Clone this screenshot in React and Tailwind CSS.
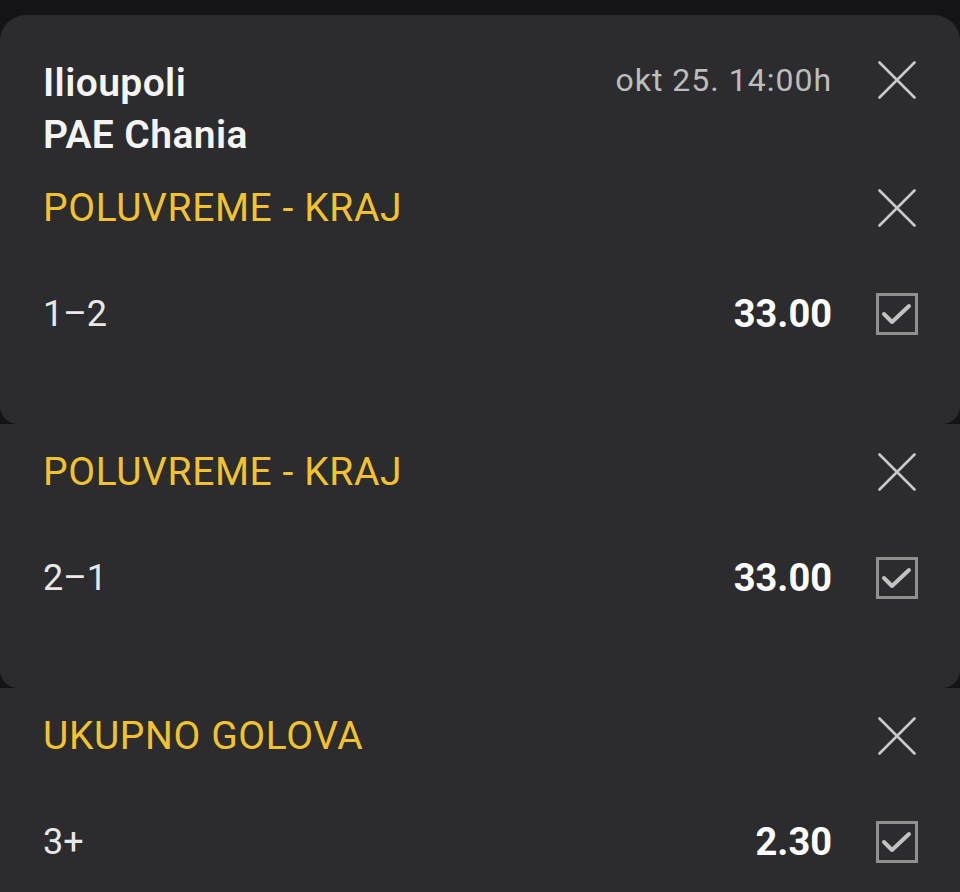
import React from "react";

const bets = [
  { market: "POLUVREME - KRAJ", pick: "1–2", odd: "33.00" },
  { market: "POLUVREME - KRAJ", pick: "2–1", odd: "33.00" },
  { market: "UKUPNO GOLOVA", pick: "3+", odd: "2.30" },
];

function CloseIcon() {
  return (
    <div className="w-[42px] h-[42px] flex items-center justify-center shrink-0">
      <svg width="38" height="38" viewBox="0 0 38 38" fill="none">
        <path d="M1.5 1.5L36.5 36.5M36.5 1.5L1.5 36.5" stroke="#c9c9c9" strokeWidth="2.6" strokeLinecap="round" />
      </svg>
    </div>
  );
}

function CheckBox() {
  return (
    <div className="w-[42px] h-[42px] shrink-0 border-[3px] border-[#8f8f8f] flex items-center justify-center">
      <svg width="36" height="36" viewBox="0 0 36 36" fill="none">
        <path d="M5 18L13 26L30 10" stroke="#c2c2c2" strokeWidth="4" strokeLinecap="round" strokeLinejoin="round" />
      </svg>
    </div>
  );
}

function BetSection({ bet }) {
  return (
    <div className="h-[264px] pl-[43px] pr-[42px] pt-[22px]">
      <div className="flex items-center justify-between h-[52px]">
        <span className="text-[39px] leading-[52px] tracking-[0.6px] text-[#f2c230]">{bet.market}</span>
        <CloseIcon />
      </div>
      <div className="flex items-center h-[52px] mt-[54px]">
        <span className="flex-1 text-[36px] leading-[52px] text-[#e8e8e8]">{bet.pick}</span>
        <span className="text-[38px] leading-[52px] font-bold text-white">{bet.odd}</span>
        <div className="ml-[44px]">
          <CheckBox />
        </div>
      </div>
    </div>
  );
}

export default function App() {
  return (
    <div className="min-h-[892px] bg-[#141416] pt-[15px] overflow-hidden" style={{ fontFamily: "Roboto, 'Noto Sans', sans-serif" }}>
      <div className="bg-[#2c2c2e] rounded-t-[26px] rounded-b-[18px]">
        <div className="h-[145px] pl-[43px] pr-[42px] pt-[42px] flex justify-between">
          <div className="text-[39px] leading-[52px] font-semibold tracking-[0.4px] text-[#f4f4f4]">
            <div>Ilioupoli</div>
            <div>PAE Chania</div>
          </div>
          <div className="flex items-start">
            <span className="text-[32px] leading-[46px] tracking-[1px] text-[#bdbdbd]">okt 25. 14:00h</span>
            <div className="ml-[44px] mt-[2px]">
              <CloseIcon />
            </div>
          </div>
        </div>
        <BetSection bet={bets[0]} />
      </div>
      <div className="bg-[#2c2c2e] rounded-b-[18px]">
        <BetSection bet={bets[1]} />
      </div>
      <div className="bg-[#2c2c2e] rounded-b-[18px]">
        <BetSection bet={bets[2]} />
      </div>
    </div>
  );
}
